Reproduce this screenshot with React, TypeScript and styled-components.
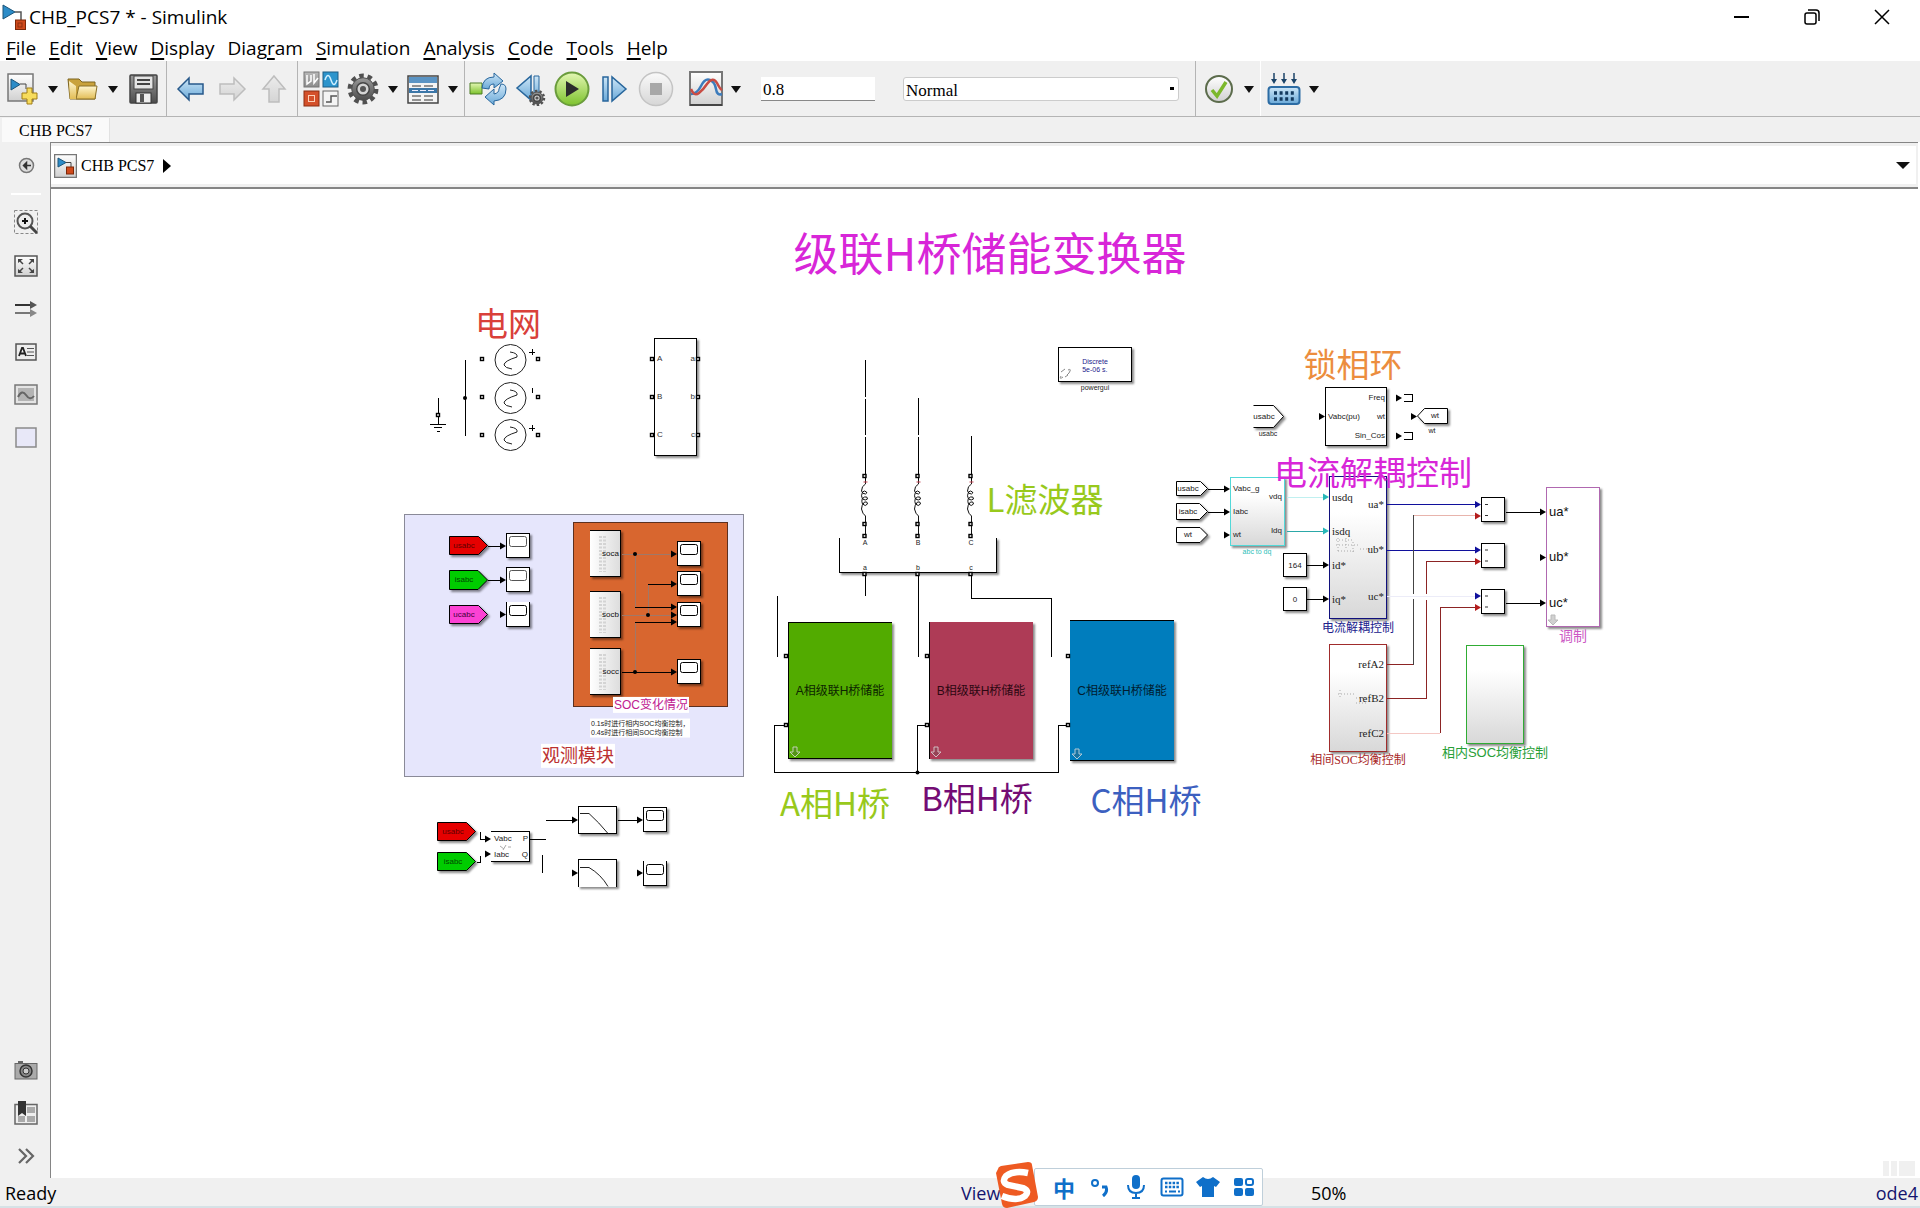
import React from "react";
import styled, { createGlobalStyle, css } from "styled-components";

const UI_FONT = `"Open Sans", "Noto Sans", sans-serif`;
const SONG_FONT = `"Liberation Serif", "Noto Sans CJK SC", serif`;
const BLOCK_FONT = `"Liberation Sans", "Noto Sans CJK SC", sans-serif`;
const NOTE_FONT = `"Noto Sans CJK SC", sans-serif`;

/* Sheet coordinates of the canvas' top left corner. */
const ORIGIN_X = 51;
const ORIGIN_Y = 189;

const GlobalStyle = createGlobalStyle`
  * { box-sizing: border-box; }
  html, body, #root { height: 100%; margin: 0; }
  body { font-family: ${UI_FONT}; background: #fff; color: #000; overflow: hidden; }
  button { font: inherit; color: inherit; background: none; border: 0; padding: 0; }
  svg { display: block; }
`;

const Window = styled.div`
  display: flex;
  flex-direction: column;
  height: 100vh;
`;

/* ---------- title and menu ---------- */

const TitleBar = styled.header`
  display: flex;
  align-items: center;
  height: 34px;
  padding: 0 3px 0 2px;
`;
const Title = styled.h1`
  flex: 1;
  margin: 0;
  padding-left: 3px;
  font-size: 19px;
  font-weight: 400;
  line-height: 34px;
`;
const WindowButton = styled.button`
  display: grid;
  place-items: center;
  width: 70px;
  height: 32px;
`;
const MenuBar = styled.nav`
  display: flex;
  gap: 13px;
  height: 27px;
  padding-left: 6px;
`;
const MenuItem = styled.button`
  font-size: 19px;
  line-height: 28px;
  u { text-underline-offset: 3px; text-decoration-thickness: 2px; }
`;

/* ---------- toolbar ---------- */

const Toolbar = styled.div`
  display: flex;
  height: 56px;
  background: #f0f0f0;
  border-bottom: 1px solid #b4b4b4;
`;
const ToolGroup = styled.div<{ $line?: string }>`
  display: flex;
  align-items: center;
  padding: 1px 2px 0;
  border-right: 1px solid ${(p) => p.$line ?? "#b4b4b4"};
`;
const ToolButton = styled.button`
  display: grid;
  place-items: center;
  width: 42px;
  height: 42px;
`;
const DropButton = styled.button`
  display: grid;
  place-items: center;
  width: 18px;
  height: 42px;
`;
const Fields = styled.div`
  display: flex;
  align-items: center;
  gap: 28px;
  padding: 0 14px 0 16px;
`;
const StopTime = styled.input`
  width: 114px;
  height: 24px;
  padding: 2px 2px 0;
  border: 0;
  border-bottom: 1px solid #888;
  background: #fff;
  font: 17px ${SONG_FONT};
`;
const ModeBox = styled.div`
  position: relative;
  width: 276px;
  &::after {
    content: "";
    position: absolute;
    right: 5px;
    top: 10px;
    width: 4px;
    height: 3px;
    background: #000;
  }
`;
const ModeSelect = styled.select`
  appearance: none;
  display: block;
  width: 100%;
  height: 24px;
  padding: 2px 2px 0;
  border: 1px solid #ccc;
  border-radius: 3px;
  background: #fff;
  color: #000;
  font: 17px ${SONG_FONT};
`;
const Spacer = styled.div`
  width: 8px;
`;

/* ---------- tabs and breadcrumb ---------- */

const TabStrip = styled.div`
  display: flex;
  align-items: flex-end;
  height: 25px;
  padding-left: 2px;
  background: #f0f0f0;
`;
const Tab = styled.button`
  height: 24px;
  padding: 2px 17px 0;
  background: #fafafa;
  border-right: 1px solid #e2e2e2;
  font-family: ${SONG_FONT};
  font-size: 16px;
`;
const Body = styled.div`
  display: flex;
  flex: 1;
  min-height: 0;
`;
const Palette = styled.aside`
  display: flex;
  flex-direction: column;
  align-items: center;
  width: 50px;
  padding: 0 0 1px 2px;
  background: #f0f0f0;
`;
const PaletteButton = styled.button<{ $tall?: boolean }>`
  display: grid;
  place-items: center;
  width: 42px;
  height: ${(p) => (p.$tall ? 47 : 43)}px;
`;
const PaletteLine = styled.hr`
  width: 30px;
  margin: 4px 0 6px;
  border: 0;
  border-top: 2px solid #fff;
`;
const Push = styled.div`
  flex: 1;
`;
const Editor = styled.main`
  display: flex;
  flex: 1;
  flex-direction: column;
  min-width: 0;
  border: solid #858585;
  border-width: 1px 0 0 1px;
  margin-right: 2px;
`;
const Breadcrumb = styled.div`
  display: flex;
  align-items: center;
  height: 44px;
  gap: 4px;
  padding: 1px 6px 0 0;
  border: solid #f0f0f0;
  border-width: 3px 2px 3px 0;
  box-shadow: 0 2px 0 #858585;
  font-family: ${SONG_FONT};
  font-size: 16px;
`;
const Crumb = styled.button`
  display: flex;
  align-items: center;
  gap: 4px;
  padding-left: 3px;
`;
const Canvas = styled.div`
  position: relative;
  flex: 1;
  margin-top: 2px;
  min-height: 0;
  overflow: hidden;
`;
const Wires = styled.svg`
  position: absolute;
  inset: 0;
  width: 1700px;
  height: 900px;
`;

/* ---------- status bar ---------- */

const StatusBar = styled.footer`
  position: relative;
  display: grid;
  grid-template-columns: 961fr 350fr 609fr;
  height: 30px;
  background: #f0f0f0;
  border-bottom: 2px solid #d6e2e6;
  font-size: 18px;
  line-height: 30px;
`;
const StatusText = styled.span`
  padding-left: 5px;
`;
const StatusEnd = styled.span`
  display: flex;
  justify-content: space-between;
  padding-right: 2px;
`;
const StatusLink = styled.a`
  color: #14146e;
  text-decoration: none;
`;
const InputMethod = styled.div`
  position: absolute;
  left: 994px;
  top: -16px;
  display: flex;
  align-items: center;
  height: 46px;
`;
const ImeKeys = styled.div`
  display: flex;
  align-items: center;
  height: 38px;
  margin: 4px 0 0 -8px;
  padding: 0 0 0 11px;
  background: #fff;
  border: 1px solid #bfcfda;
  border-radius: 2px;
`;
const ImeLogo = styled.button`
  position: relative;
  z-index: 1;
  width: 48px;
  height: 46px;
`;
const ImeKey = styled.button`
  display: grid;
  place-items: center;
  width: 36px;
  height: 36px;
  color: #0f6fc9;
  font-family: ${NOTE_FONT};
  font-size: 22px;
  font-weight: 700;
  line-height: 36px;
`;
const Grip = styled.div`
  position: absolute;
  right: 3px;
  bottom: 2px;
  display: flex;
  gap: 2px;
  span { height: 15px; width: 6px; background: #f0f0f0; }
  span:last-child { width: 16px; }
`;

/* ---------- diagram parts ---------- */

type Box = { $x: number; $y: number; $w: number; $h: number };
const box = css<Box>`
  position: absolute;
  left: ${(p) => p.$x - ORIGIN_X}px;
  top: ${(p) => p.$y - ORIGIN_Y}px;
  width: ${(p) => p.$w}px;
  height: ${(p) => p.$h}px;
`;
const Area = styled.div<Box & { $fill: string; $line: string }>`
  ${box}
  background: ${(p) => p.$fill};
  border: 1px solid ${(p) => p.$line};
`;
const Block = styled.div<Box & { $fill?: string; $line?: string; $sides?: string }>`
  ${box}
  background: ${(p) => p.$fill ?? "#fff"};
  border: solid ${(p) => p.$line ?? "#000"};
  border-width: ${(p) => p.$sides ?? "1px"};
  box-shadow: 2px 2px 2px rgba(0, 0, 0, 0.45);
`;
const Label = styled.span<{
  $x: number; $y: number; $size: number; $color?: string; $font?: string; $at?: "start" | "mid" | "end"; $plate?: boolean;
}>`
  position: absolute;
  left: ${(p) => p.$x - ORIGIN_X}px;
  top: ${(p) => p.$y - ORIGIN_Y}px;
  transform: translate(${(p) => (p.$at === "start" ? "0" : p.$at === "end" ? "-100%" : "-50%")}, -50%);
  font-family: ${(p) => p.$font ?? BLOCK_FONT};
  font-size: ${(p) => p.$size}px;
  line-height: ${(p) => (p.$plate ? 1.35 : 1.2)};
  padding: 0 ${(p) => (p.$plate ? 1 : 0)}px;
  background: ${(p) => (p.$plate ? "#fff" : "none")};
  color: ${(p) => p.$color ?? "#222"};
  white-space: pre;
`;

const SHADE = "linear-gradient(#fff 25%, #d8d8d8)";

type LabelRow = [string, number, number, number, string?, string?, ("start" | "mid" | "end")?, boolean?];

const LABELS: LabelRow[] = [
  ["电网", 508, 323, 33, "#d9403a", NOTE_FONT],
  ["L滤波器", 1045, 499, 33, "#98c91c", NOTE_FONT],
  ["A相H桥", 835, 803, 33, "#98c91c", NOTE_FONT],
  ["B相H桥", 977, 798, 33, "#740c74", NOTE_FONT],
  ["C相H桥", 1146, 800, 33, "#3c60c0", NOTE_FONT],
  ["锁相环", 1353, 364, 33, "#ec8d3e", NOTE_FONT],
  ["电流解耦控制", 1373, 472, 33, "#d826d8", NOTE_FONT],
  ["级联H桥储能变换器", 990, 252, 45, "#d826d8", NOTE_FONT],
  ["A", 657, 359, 8, "#333", BLOCK_FONT, "start"],
  ["B", 657, 397, 8, "#333", BLOCK_FONT, "start"],
  ["C", 657, 435, 8, "#333", BLOCK_FONT, "start"],
  ["a", 695, 359, 8, "#333", BLOCK_FONT, "end"],
  ["b", 695, 397, 8, "#333", BLOCK_FONT, "end"],
  ["c", 695, 435, 8, "#333", BLOCK_FONT, "end"],
  ["usabc", 464, 546, 8, "#5c0000"],
  ["isabc", 464, 580, 8, "#004800"],
  ["ucabc", 464, 615, 8, "#400038"],
  ["soca", 619, 554, 8, "#111", BLOCK_FONT, "end"],
  ["socb", 619, 615, 8, "#111", BLOCK_FONT, "end"],
  ["socc", 619, 672, 8, "#111", BLOCK_FONT, "end"],
  ["SOC变化情况", 651, 705, 12, "#c02090", BLOCK_FONT, "mid", true],
  ["0.1s时进行相内SOC均衡控制，\n0.4s时进行相间SOC均衡控制", 590, 728, 7, "#222", BLOCK_FONT, "start", true],
  ["观测模块", 578, 756, 18, "#bb3030", SONG_FONT, "mid", true],
  ["usabc", 453, 832, 8, "#5c0000"],
  ["isabc", 453, 862, 8, "#004800"],
  ["Vabc", 494, 839, 8, "#222", BLOCK_FONT, "start"],
  ["Iabc", 494, 855, 8, "#222", BLOCK_FONT, "start"],
  ["P", 528, 839, 8, "#222", BLOCK_FONT, "end"],
  ["Q", 528, 855, 8, "#222", BLOCK_FONT, "end"],
  ["A", 865, 543, 7], ["B", 918, 543, 7], ["C", 971, 543, 7],
  ["a", 865, 568, 7], ["b", 918, 568, 7], ["c", 971, 568, 7],
  ["Discrete\n5e-06 s.", 1095, 366, 7, "#22228c"],
  ["powergui", 1095, 388, 7],
  ["A相级联H桥储能", 840, 691, 12, "#0c2400"],
  ["B相级联H桥储能", 981, 691, 12, "#2c0812"],
  ["C相级联H桥储能", 1122, 691, 12, "#001c30"],
  ["usabc", 1264, 417, 8],
  ["usabc", 1268, 434, 7],
  ["Freq", 1385, 398, 8, "#222", BLOCK_FONT, "end"],
  ["Vabc(pu)", 1328, 417, 8, "#222", BLOCK_FONT, "start"],
  ["wt", 1385, 417, 8, "#222", BLOCK_FONT, "end"],
  ["Sin_Cos", 1385, 436, 8, "#222", BLOCK_FONT, "end"],
  ["wt", 1435, 416, 8],
  ["wt", 1432, 431, 7],
  ["usabc", 1188, 489, 8],
  ["isabc", 1188, 512, 8],
  ["wt", 1188, 535, 8],
  ["Vabc_g", 1233, 489, 8, "#222", BLOCK_FONT, "start"],
  ["Iabc", 1233, 512, 8, "#222", BLOCK_FONT, "start"],
  ["wt", 1233, 535, 8, "#222", BLOCK_FONT, "start"],
  ["vdq", 1282, 497, 8, "#222", BLOCK_FONT, "end"],
  ["Idq", 1282, 531, 8, "#222", BLOCK_FONT, "end"],
  ["abc to dq", 1257, 552, 7, "#2cc0b8"],
  ["usdq", 1332, 498, 11, "#222", SONG_FONT, "start"],
  ["isdq", 1332, 532, 11, "#222", SONG_FONT, "start"],
  ["id*", 1332, 566, 11, "#222", SONG_FONT, "start"],
  ["iq*", 1332, 600, 11, "#222", SONG_FONT, "start"],
  ["ua*", 1384, 505, 11, "#222", SONG_FONT, "end"],
  ["ub*", 1384, 550, 11, "#222", SONG_FONT, "end"],
  ["uc*", 1384, 597, 11, "#222", SONG_FONT, "end"],
  ["164", 1295, 566, 8],
  ["0", 1295, 600, 8],
  ["电流解耦控制", 1358, 628, 12, "#20208c", SONG_FONT],
  ["refA2", 1384, 665, 11, "#222", SONG_FONT, "end"],
  ["refB2", 1384, 699, 11, "#222", SONG_FONT, "end"],
  ["refC2", 1384, 734, 11, "#222", SONG_FONT, "end"],
  ["相间SOC均衡控制", 1358, 760, 12, "#a82828", SONG_FONT],
  ["相内SOC均衡控制", 1495, 753, 13, "#28a038"],
  ["ua*", 1549, 512, 13, "#111", BLOCK_FONT, "start"],
  ["ub*", 1549, 557, 13, "#111", BLOCK_FONT, "start"],
  ["uc*", 1549, 603, 13, "#111", BLOCK_FONT, "start"],
  ["调制", 1573, 637, 14, "#cc58c4", SONG_FONT],
];

const Port = ({ x, y }: { x: number; y: number }) => (
  <rect x={x - 1.5} y={y - 1.5} width="3" height="3" fill="#fff" stroke="#000" strokeWidth="1.4" />
);
const Tip = ({ x, y, c = "#000" }: { x: number; y: number; c?: string }) => (
  <path d={`M${x} ${y}l-6-3.5v7z`} fill={c} />
);
const Wire = ({ d, c = "#000" }: { d: string; c?: string }) => (
  <path d={d} fill="none" stroke={c} shapeRendering="crispEdges" />
);
const Tag = ({ x, y, w, h, fill = "#fff", open }: { x: number; y: number; w: number; h: number; fill?: string; open?: boolean }) => {
  const k = Math.min(10, h / 2);
  return (
    <path
      d={`M${x} ${y}h${w - k}l${k} ${h / 2}l${-k} ${h / 2}h${k - w}${open ? "" : "z"}`}
      fill={fill}
      stroke="#000"
      filter="url(#drop)"
    />
  );
};
const Screen = ({ x, y, faint }: { x: number; y: number; faint?: boolean }) => (
  <rect x={x + 4.5} y={y + 4.5} width="17" height="10" rx="2" fill="#fff" stroke={faint ? "#555" : "#000"} />
);
const Enter = ({ x, y, c = "#ddd" }: { x: number; y: number; c?: string }) => (
  <path d={`M${x - 2} ${y - 5}h4v5h3l-5 5l-5-5h3z`} fill="rgba(90,90,90,.35)" stroke={c} opacity=".8" />
);
const Source = ({ y }: { y: number }) => (
  <g fill="none" stroke="#222">
    <circle cx="510.500" cy={y} r="15.500" />
    <path d={`M510 ${y - 8}q8 1 7 5q-13 4-13 8q1 3 8 4`} />
  </g>
);
const Coil = ({ x }: { x: number }) => (
  <g fill="none" stroke="#111">
    <path d={`M${x} 480v4q-4 2-4 7q1 3 4 3q2-1 1-2q-2-2-4 0q-2 4 0 7q3 2 5 0q0-3-3-2q-4 2-2 7q3 3 5 0q0-3-3-2q-3 3-3 7q1 5 4 7v22`} />
    <path d={`M${x - 2} 482h4`} stroke="#c04050" />
    <Port x={x - 1} y={476} />
    <Port x={x - 1} y={524} />
    <Port x={x - 1} y={536} />
    <Port x={x - 1} y={574} />
  </g>
);

const SCOPES: [number, number, string?][] = [
  [506, 533], [506, 567], [506, 602, "0 1px 1px 1px"],
  [677, 541], [677, 571], [677, 602], [677, 659],
  [643, 807], [643, 861, "0 1px 1px 1px"],
];

function Diagram() {
  return (
    <Canvas>
      <Area $x={404} $y={514} $w={340} $h={263} $fill="#e6e6fc" $line="#8a8a98" />
      <Area $x={573} $y={522} $w={155} $h={185} $fill="#d8662f" $line="#5c3020" />
      <Block $x={654} $y={338} $w={43} $h={118} />
      {[530, 591, 648].map((y) => (
        <Block key={y} $x={590} $y={y} $w={31} $h={47} $fill="linear-gradient(90deg,#fff,#ddd)" $sides="1px 1px 1px 0" />
      ))}
      {SCOPES.map(([x, y, sides]) => (
        <Block key={`${x}-${y}`} $x={x} $y={y} $w={24} $h={25} $sides={sides} />
      ))}
      <Block $x={491} $y={831} $w={39} $h={31} $sides="1px 1px 1px 0" />
      <Block $x={578} $y={806} $w={39} $h={28} />
      <Block $x={578} $y={859} $w={39} $h={28} $sides="1px 1px 0 1px" />
      <Block $x={839} $y={538} $w={158} $h={35} $sides="0 1px 1px 1px" />
      <Block $x={1058} $y={347} $w={74} $h={35} />
      <Block $x={788} $y={622} $w={104} $h={137} $fill="#52ab00" $sides="1px 0 1px 1px" />
      <Block $x={929} $y={622} $w={104} $h={137} $fill="#ae3b56" $sides="0 0 0 1px" />
      <Block $x={1070} $y={620} $w={104} $h={141} $fill="#007dbd" $sides="1px 0" />
      <Block $x={1325} $y={387} $w={62} $h={59} />
      <Block $x={1230} $y={477} $w={55} $h={69} $fill={SHADE} $line="#52d8d8" />
      <Block $x={1329} $y={476} $w={58} $h={143} $fill={SHADE} $line="#10107c" />
      <Block $x={1329} $y={644} $w={58} $h={108} $fill={SHADE} $line="#a02c2c" />
      <Block $x={1466} $y={645} $w={58} $h={99} $fill={SHADE} $line="#30ac34" />
      <Block $x={1546} $y={487} $w={54} $h={140} $line="#b068b0" />
      <Block $x={1283} $y={553} $w={24} $h={24} />
      <Block $x={1283} $y={587} $w={24} $h={24} />
      {[497, 543, 589].map((y) => (
        <Block key={y} $x={1481} $y={y} $w={24} $h={25} />
      ))}

      <Wires viewBox={`${ORIGIN_X} ${ORIGIN_Y} 1700 900`} aria-hidden="true">
        {/* grid sources */}
        <Wire d="M465.500 360v76M438.500 398v26M430 424.500h16M434 427.500h8M437 431.500h3" />
        <circle cx="465" cy="398" r="2" />
        <Port x={438} y={415} />
        <Source y={360} /><Source y={398} /><Source y={435} />
        <Wire d="M529 352.500h6M532.500 349v6M532.500 388v5M529 428.500h6M532.500 425v6" />
        {[359, 397, 435].map((y) => (
          <g key={y}>
            <Port x={482} y={y} /><Port x={538} y={y} /><Port x={652} y={y} /><Port x={698} y={y} />
          </g>
        ))}

        {/* observation tags */}
        <Tag x={449.5} y={536.5} w={38} h={18} fill="#e60000" />
        <Tag x={449.5} y={570.5} w={38} h={19} fill="#00cc00" />
        <Tag x={449.5} y={605.5} w={38} h={18} fill="#fc42d4" />
        <Wire d="M488 546.500h14M488 580.500h14" />
        <Tip x={506} y={546} /><Tip x={506} y={580} /><Tip x={506} y={614.5} />
        {SCOPES.map(([x, y], i) => <Screen key={i} x={x - 1} y={y - 1} faint={i < 2} />)}
        {[530, 591, 648].map((y) => (
          <path key={y} d={`M600.500 ${y + 6}v36M604.500 ${y + 6}v36`} stroke="#d4d4d4" strokeWidth="3" strokeDasharray="2 1.500" />
        ))}
        <Wire c="#a07868" d="M622 554.500h50M622 615.500h50M635.500 554v53M648.500 584v31M635.500 622v50" />
        <Wire d="M635 607.500h37M648 584.500h24M635 622.500h37M622 672.500h50" />
        {[554, 584, 607, 615, 622, 672].map((y) => <Tip key={y} x={677} y={y} />)}
        <circle cx="635" cy="554" r="2" /><circle cx="648" cy="615" r="2" /><circle cx="635" cy="672" r="2" />

        {/* power measurement */}
        <Tag x={437.5} y={822.5} w={38} h={18} fill="#e60000" />
        <Tag x={437.5} y={852.5} w={38} h={18} fill="#00cc00" />
        <Wire d="M480.500 832v7.500h6M477 862.500h3.500v-7M530 839.500h16M542.500 855v18M546 820.500h27M618 820.500h20" />
        <Tip x={491} y={839} /><Tip x={491} y={854} /><Tip x={578} y={820} /><Tip x={643} y={820} />
        <Tip x={578} y={873} /><Tip x={643} y={873} />
        <path d="M580 813.500h9q10 9 19 20M580 867.500h9q12 7 19 19" fill="none" stroke="#222" />
        <path d="M500 846l4 3m2-4l-3 5m5-3h3" stroke="#aaa" />

        {/* filter and busbar */}
        <Wire d="M865.500 360v37M865.500 399v36M865.500 437v43M918.500 398v37M918.500 437v43M971.500 436v44" />
        <Coil x={865.5} /><Coil x={918.5} /><Coil x={971.5} />
        <Wire d="M865.500 576v20M918.500 576v81M971.500 576v22.500h80v58.500M777.500 596v61" />
        <Wire d="M785 725.500h-10.500v47h284v-47h11M917.500 772v-46.500h11" />
        <circle cx="917.500" cy="772.500" r="2" />
        {[787, 928, 1069].map((x) => <g key={x}><Port x={x - 1} y={656} /><Port x={x - 1} y={725} /></g>)}
        <Enter x={795} y={752} /><Enter x={936} y={752} /><Enter x={1077} y={754} />
        <path d="M1061 372l4-3m3 1q4-2 1 3l-2 2m-4 2q-4 3-2-1m4 1l3-2" fill="none" stroke="#888" />

        {/* phase locked loop */}
        <Tag x={1253.5} y={405.5} w={30} h={22} open />
        <path d="M1447.500 408.500h-23l-7 7.500l7 7.500h23z" fill="#fff" stroke="#000" filter="url(#drop)" />
        <Tip x={1325} y={416.5} /><Tip x={1402} y={398} /><Tip x={1417} y={416.5} /><Tip x={1402} y={436} />
        <Wire d="M1404 394.500h8.500v7h-8.500M1404 432.500h8.500v7h-8.500" />

        {/* decoupled current control */}
        <Tag x={1176.5} y={481.5} w={31} h={14} /><Tag x={1176.5} y={503.5} w={31} h={16} /><Tag x={1176.5} y={527.5} w={31} h={15} />
        <Wire d="M1208 489.500h17M1208 512.500h17M1307 565.500h17M1307 599.500h17M1506 512.500h35M1506 603.500h35" />
        <Tip x={1230} y={489} /><Tip x={1230} y={512} /><Tip x={1230} y={535} />
        <Tip x={1329} y={565} /><Tip x={1329} y={599} />
        <Tip x={1546} y={512} /><Tip x={1546} y={557.5} /><Tip x={1546} y={603} />
        <Wire c="#c0f0f0" d="M1287 497.500h37" />
        <Wire c="#2ca8a8" d="M1287 531.500h37" />
        <Tip x={1329} y={497} c="#28b8b8" /><Tip x={1329} y={531} c="#28b8b8" />
        <Wire c="#10109c" d="M1387 504.500h89M1387 550.500h89" />
        <Wire c="#ececf8" d="M1387 596.500h89" />
        <Wire c="#e8b4ac" d="M1414 515.500h62" />
        <Wire c="#444" d="M1413.500 515v79M1413.500 599v66" />
        <Wire c="#8c2424" d="M1387 664.500h26M1387 698.500h39.500v-99M1426.500 594v-32.500h50M1440.500 733v-125.500h36" />
        <Wire c="#f4c8c4" d="M1387 733.500h53" />
        {[504.5, 550, 596].map((y) => (
          <g key={y}>
            <Tip x={1481} y={y} c="#10109c" /><Tip x={1481} y={y + 11.5} c="#b41c1c" />
            <path d={`M1485 ${y}h3M1485 ${y + 11}h3`} stroke="#333" />
          </g>
        ))}
        <path d="M1336 540h18M1336 545h22M1338 551h16M1360 549h10M1338 538v14M1346 538v10M1353 542v12M1338 694h16M1356 698h10M1356 703h12M1340 690v8" stroke="#aaa" strokeDasharray="1 2" />
        <Enter x={1553} y={620} c="#aaa" />
      </Wires>

      {LABELS.map(([text, x, y, size, color, font, at, plate], i) => (
        <Label key={i} $x={x} $y={y} $size={size} $color={color} $font={font} $at={at} $plate={plate}>{text}</Label>
      ))}
      <Grip><span /><span /><span /></Grip>
    </Canvas>
  );
}

/* ---------- icons ---------- */

const Svg = ({ w, h, children }: { w: number; h: number; children: React.ReactNode }) => (
  <svg width={w} height={h} viewBox={`0 0 ${w} ${h}`} fill="none" aria-hidden="true">{children}</svg>
);

const Defs = styled.svg`
  position: absolute;
  width: 0;
  height: 0;
`;
const Grad = ({ id, a, b }: { id: string; a: string; b: string }) => (
  <linearGradient id={id} x1="0" y1="0" x2="0" y2="1"><stop stopColor={a} /><stop offset="1" stopColor={b} /></linearGradient>
);
const Gradients = () => (
  <Defs aria-hidden="true">
    <defs>
      <Grad id="blue" a="#cde6f7" b="#6aa9d8" />
      <Grad id="pale" a="#ececec" b="#d4d4d4" />
      <Grad id="gold" a="#fff6cf" b="#e2bd55" />
      <Grad id="steel" a="#9a9a9a" b="#4c4c4c" />
      <Grad id="silver" a="#b8b8b8" b="#8c8c8c" />
      <Grad id="paper" a="#ffffff" b="#d0d0d0" />
      <Grad id="green" a="#e4f7b4" b="#7cc22c" />
      <Grad id="stop" a="#fafafa" b="#d6d6d6" />
      <filter id="drop" x="-20%" y="-20%" width="150%" height="160%">
        <feDropShadow dx="2" dy="2" stdDeviation="1" floodOpacity=".45" />
      </filter>
    </defs>
  </Defs>
);

const AppIcon = () => (
  <Svg w={24} h={26}>
    <path d="M1 1v14l12-7z" fill="#2c8cc8" stroke="#1c5478" />
    <path d="M13 8h6v9" stroke="#555" strokeWidth="1.500" />
    <rect x="13.500" y="16" width="10" height="9.500" fill="#d04a1c" stroke="#7c2808" /><rect x="16" y="19" width="4" height="4" stroke="#8c3010" />
  </Svg>
);
const ModelIcon = () => (
  <Svg w={23} h={24}>
    <rect x=".5" y=".5" width="22" height="23" fill="url(#paper)" stroke="#777" strokeWidth="1.500" />
    <path d="M4 4v9l8-4.500z" fill="#2c8cc8" stroke="#1c5478" /><path d="M12 8.500h5v5" stroke="#444" />
    <rect x="12.500" y="13" width="7" height="7" fill="#d04a1c" stroke="#7c2808" />
  </Svg>
);
const NewIcon = () => (
  <Svg w={32} h={34}>
    <rect x="1" y="2" width="25" height="27" fill="url(#paper)" stroke="#777" strokeWidth="1.500" />
    <path d="M4 7v11l9-5.500z" fill="#2c8cc8" stroke="#1c5478" /><path d="M13 12h6v5" stroke="#444" />
    <path d="M20 16h5v5h5v6h-5v5h-5v-5h-5v-6h5z" fill="#f7dc5c" stroke="#a07c14" />
  </Svg>
);
const FolderIcon = () => (
  <Svg w={32} h={24}>
    <path d="M3 22L1 2h11l3 3h13v17z" fill="#c9a23c" stroke="#7d6420" /><path d="M9 22l3-13h18l-2 13z" fill="url(#gold)" stroke="#8a7028" /><path d="M2 4l7 5v13H3z" fill="url(#gold)" />
  </Svg>
);
const SaveIcon = () => (
  <Svg w={29} h={30}>
    <rect x="1" y="1" width="27" height="28" rx="1" fill="url(#steel)" stroke="#444" strokeWidth="1.500" />
    <rect x="5" y="2" width="19" height="13" fill="#e4e4e4" stroke="#444" /><path d="M8 6h13M8 10h13" stroke="#444" strokeWidth="2" />
    <rect x="7" y="19" width="15" height="10" fill="#eee" stroke="#333" /><rect x="11" y="20" width="4" height="8" fill="#555" />
  </Svg>
);
const LeftIcon = () => (
  <Svg w={29} h={26}><path d="M2 13L13 2v6h14v10H13v6z" fill="url(#blue)" stroke="#27588a" strokeWidth="1.500" /></Svg>
);
const RightIcon = () => (
  <Svg w={29} h={26}><path d="M27 13L16 2v6H2v10h14v6z" fill="url(#pale)" stroke="#bdbdbd" strokeWidth="1.500" /></Svg>
);
const UpIcon = () => (
  <Svg w={26} h={30}><path d="M13 2l11 13h-6v13H8V15H2z" fill="url(#pale)" stroke="#bdbdbd" strokeWidth="1.500" /></Svg>
);
const LibraryIcon = () => (
  <Svg w={36} h={36}>
    <rect x="1" y="1" width="15" height="15" fill="url(#silver)" stroke="#777" /><path d="M4 4v9l4-3V4M11 3v9l4-5" stroke="#fff" strokeWidth="1.500" />
    <rect x="20" y="1" width="15" height="15" fill="#2c94cc" stroke="#1c5c84" /><path d="M22 9q3-9 6 0t6 0" stroke="#cfefff" strokeWidth="1.500" />
    <rect x="1" y="20" width="15" height="15" fill="#d4502a" stroke="#8c2c10" /><rect x="5.500" y="24.500" width="6" height="6" stroke="#fbd0b8" />
    <rect x="20" y="20" width="15" height="15" fill="#f4f4f4" stroke="#666" /><path d="M23 31h5v-6h6" stroke="#555" strokeWidth="1.500" />
  </Svg>
);
const GearShape = ({ x, y, r }: { x: number; y: number; r: number }) => (
  <g>
    <circle cx={x} cy={y} r={r * 0.88} stroke="#505050" strokeWidth={r * 0.3} strokeDasharray={`${r * 0.3} ${r * 0.253}`} />
    <circle cx={x} cy={y} r={r * 0.75} fill="url(#steel)" stroke="#505050" />
    <circle cx={x} cy={y} r={r * 0.42} fill="#d4d4d4" stroke="#444" strokeWidth="1.500" />
    <circle cx={x} cy={y} r={r * 0.2} fill="#555" />
  </g>
);
const GearIcon = () => <Svg w={32} h={32}><GearShape x={16} y={16} r={15} /></Svg>;
const ListIcon = () => (
  <Svg w={32} h={29}>
    <rect x="1" y="1" width="30" height="27" fill="#f4f4f4" stroke="#444" strokeWidth="1.500" />
    <rect x="2" y="2" width="28" height="6" fill="#5b94c4" /><rect x="2" y="13" width="28" height="5" fill="#3c77a8" />
    <path d="M5 11h9m3 0h9M5 21h9m3 0h9M5 25h9m3 0h9" stroke="#333" /><path d="M5 15.500h22" stroke="#eef" strokeDasharray="6 2" />
  </Svg>
);
const RefreshIcon = () => (
  <Svg w={38} h={34}>
    <path d="M1 11h12v11H1z" fill="url(#green)" stroke="#4c7c24" />
    <path d="M13 16q1-11 12-11V1l9 8-9 7v-4q-5 0-5 5z" fill="url(#blue)" stroke="#28669c" /><path d="M37 17q0 11-12 12v4l-9-8 9-8v5q5-1 5-5l2-5q5 0 5 5z" fill="url(#blue)" stroke="#28669c" />
  </Svg>
);
const StepBackIcon = () => (
  <Svg w={31} h={34}>
    <path d="M16 4v24L2 16z" fill="url(#blue)" stroke="#28669c" strokeWidth="1.500" /><path d="M19 4h5v24h-5z" fill="url(#blue)" stroke="#28669c" />
    <GearShape x={22} y={26} r={8} />
  </Svg>
);
const PlayIcon = () => (
  <Svg w={36} h={36}>
    <circle cx="18" cy="18" r="16.500" fill="url(#green)" stroke="#6a9c3c" strokeWidth="2" /><path d="M12 10v16l13-8z" fill="#2c2c2c" />
  </Svg>
);
const StepIcon = () => (
  <Svg w={27} h={28}>
    <path d="M2 2h5v24H2z" fill="url(#blue)" stroke="#28669c" strokeWidth="1.500" /><path d="M11 2v24l14-12z" fill="url(#blue)" stroke="#28669c" strokeWidth="1.500" />
  </Svg>
);
const StopIcon = () => (
  <Svg w={36} h={36}>
    <circle cx="18" cy="18" r="16.500" fill="url(#stop)" stroke="#c4c4c4" strokeWidth="1.500" /><rect x="12" y="12" width="12" height="12" fill="#a8a8a8" />
  </Svg>
);
const ScopeIcon = () => (
  <Svg w={34} h={36}>
    <rect x="1" y="1" width="32" height="33" fill="url(#paper)" stroke="#777" strokeWidth="2" />
    <path d="M2 23q6 0 10-8t9-6 6 9 6 5" stroke="#3c7cbc" strokeWidth="2.500" /><path d="M2 18q3 8 8 4 4-3 8-9 6-8 10-1 3 6 5 7" stroke="#c84c44" strokeWidth="2.500" />
    <path d="M1 34h32" stroke="#444" strokeWidth="2" />
  </Svg>
);
const CheckIcon = () => (
  <Svg w={30} h={30}>
    <circle cx="15" cy="15" r="13" fill="url(#paper)" stroke="#5c6c4c" strokeWidth="2" /><path d="M8 16l5 6 9-14" stroke="#7cb82c" strokeWidth="3.500" />
  </Svg>
);
const BuildIcon = () => (
  <Svg w={34} h={34}>
    <path d="M7 1v7M17 1v7M27 1v7" stroke="#1c4468" strokeWidth="1.500" /><path d="M4 7h6l-3 5zM14 7h6l-3 5zM24 7h6l-3 5z" fill="#1c4468" />
    <rect x="1.500" y="15" width="31" height="17" rx="3" fill="url(#blue)" stroke="#2c6ca4" strokeWidth="2" />
    <path d="M7 21h20M7 27h20" stroke="#12395e" strokeWidth="3.500" strokeDasharray="3 2.600" />
  </Svg>
);
const Down = ({ w = 10 }: { w?: number }) => (
  <Svg w={w} h={7}><path d={`M0 0h${w}L${w / 2} 7z`} fill="#111" /></Svg>
);

const HideIcon = () => (
  <Svg w={17} h={17}><circle cx="8.500" cy="8.500" r="7" fill="#ddd" stroke="#777" strokeWidth="1.500" /><path d="M13 8.500H6M8.500 5.500l-3 3 3 3z" fill="#333" stroke="#333" strokeWidth="1.500" /></Svg>
);
const ZoomIcon = () => (
  <Svg w={24} h={25}>
    <rect x=".5" y=".5" width="23" height="23" stroke="#888" strokeDasharray="3 2" /><circle cx="11" cy="11" r="7.500" fill="#eee" stroke="#555" strokeWidth="2" />
    <path d="M8 11h6M11 8v6" stroke="#111" strokeWidth="2" /><path d="M16 16l7 7" stroke="#444" strokeWidth="3" />
  </Svg>
);
const FitIcon = () => (
  <Svg w={24} h={22}>
    <rect x="1" y="1" width="22" height="20" fill="url(#paper)" stroke="#555" strokeWidth="1.500" />
    <path d="M4 8V4h5zM20 8V4h-5zM4 14v4h5zM20 14v4h-5z" fill="#444" /><path d="M5 5l4 4M19 5l-4 4M5 17l4-4M19 17l-4-4" stroke="#444" strokeWidth="1.500" />
  </Svg>
);
const SignalsIcon = () => (
  <Svg w={24} h={16}>
    <path d="M1 4h16" stroke="#333" strokeWidth="2" /><path d="M16 0l7 4-7 4z" fill="#555" /><path d="M1 12h16" stroke="#777" strokeWidth="2" /><path d="M16 8l7 4-7 4z" fill="#888" />
  </Svg>
);
const TextIcon = () => (
  <Svg w={22} h={18}>
    <rect x="1" y="1" width="20" height="16" fill="#eee" stroke="#555" strokeWidth="1.500" />
    <path d="M4 13l3-8h1l3 8M5 10.500h5" stroke="#222" strokeWidth="1.800" /><path d="M12 5.500h7M12 9h7M12 12.500h7" stroke="#555" />
  </Svg>
);
const ImageIcon = () => (
  <Svg w={24} h={21}>
    <rect x="1" y="1" width="22" height="19" fill="#e4e4e4" stroke="#777" strokeWidth="1.500" /><rect x="4" y="4" width="16" height="13" fill="#b4b4b4" />
    <path d="M4 13q4-8 8-2t8 1" stroke="#666" strokeWidth="2" />
  </Svg>
);
const AreaIcon = () => <Svg w={22} h={21}><rect x="1" y="1" width="20" height="19" fill="#e8e8f8" stroke="#8a8a8a" strokeWidth="1.500" /></Svg>;
const CameraIcon = () => (
  <Svg w={24} h={20}>
    <path d="M4 1h5v3H4z" fill="#666" /><rect x="1" y="3.500" width="22" height="15.500" fill="#aaa" stroke="#666" /><circle cx="12" cy="11" r="6" fill="#888" stroke="#333" strokeWidth="1.500" /><circle cx="12" cy="11" r="3" fill="#ccc" stroke="#333" />
  </Svg>
);
const BookmarkIcon = () => (
  <Svg w={24} h={24}>
    <rect x="1" y="3.500" width="22" height="19.500" fill="#eee" stroke="#666" strokeWidth="1.500" /><path d="M13 6h8v6h-8zM4 15h7v6H4zM13 15h8v6h-8z" fill="#aaa" /><path d="M4 0h8v15l-4-3-4 3z" fill="#333" />
  </Svg>
);
const MoreIcon = () => <Svg w={18} h={16}><path d="M2 1l7 7-7 7M9 1l7 7-7 7" stroke="#666" strokeWidth="2.200" /></Svg>;

const SogouLogo = () => (
  <Svg w={48} h={46}>
    <path d="M4 7Q4 5 7 4L34 0q4 0 4 3l6 32q0 4-4 5L13 46q-4 0-5-4L2 11z" fill="#ee5a22" />
    <path d="M34 11Q20 8 12 14q-5 6 2 9l15 3q7 3 2 8-8 6-23 0" stroke="#fff" strokeWidth="6.500" />
  </Svg>
);
const PunctIcon = () => (
  <Svg w={20} h={20}><circle cx="5" cy="6" r="3" stroke="currentColor" strokeWidth="2" /><path d="M12 10h4q2 5-3 9" stroke="currentColor" strokeWidth="3" /></Svg>
);
const MicIcon = () => (
  <Svg w={20} h={26}><rect x="6" y="1" width="8" height="14" rx="4" fill="currentColor" /><path d="M2 11q0 8 8 8t8-8M10 19v4M6 24h8" stroke="currentColor" strokeWidth="2" /></Svg>
);
const KeyboardIcon = () => (
  <Svg w={24} h={20}><rect x="1.500" y="1.500" width="21" height="17" rx="2" stroke="currentColor" strokeWidth="2" /><path d="M5 6h14M5 10h14" stroke="currentColor" strokeWidth="2.500" strokeDasharray="2.500 1.300" /><path d="M5 14.500h2m2 0h7m2 0h2" stroke="currentColor" strokeWidth="2" /></Svg>
);
const ShirtIcon = () => (
  <Svg w={24} h={22}><path d="M7 1q5 4 10 0l7 5-4 5-2-1v11H6V10l-2 1-4-5z" fill="currentColor" /></Svg>
);
const GridIcon = () => (
  <Svg w={22} h={20}><rect x="1" y="1" width="9" height="8" rx="2" fill="currentColor" /><rect x="13" y="2" width="7" height="6" rx="2" stroke="currentColor" strokeWidth="2" /><rect x="1" y="11" width="9" height="8" rx="2" fill="currentColor" /><rect x="12" y="11" width="9" height="8" rx="2" fill="currentColor" /></Svg>
);

const MENUS: [string, string, string][] = [
  ["", "F", "ile"], ["", "E", "dit"], ["", "V", "iew"], ["", "D", "isplay"], ["Diag", "r", "am"],
  ["", "S", "imulation"], ["", "A", "nalysis"], ["", "C", "ode"], ["", "T", "ools"], ["", "H", "elp"],
];

const Tool = ({ label, icon }: { label: string; icon: React.ReactNode }) => (
  <ToolButton aria-label={label}>{icon}</ToolButton>
);
const Drop = ({ label }: { label: string }) => (
  <DropButton aria-label={label}><Down /></DropButton>
);

export default function App() {
  return (
    <Window>
      <GlobalStyle />
      <Gradients />
      <TitleBar>
        <AppIcon />
        <Title>CHB_PCS7 * - Simulink</Title>
        <WindowButton aria-label="Minimize"><Svg w={16} h={16}><path d="M0 8h15" stroke="#000" strokeWidth="2" /></Svg></WindowButton>
        <WindowButton aria-label="Restore">
          <Svg w={16} h={17}><rect x="1" y="4" width="11" height="11" rx="2" stroke="#000" strokeWidth="1.500" /><path d="M4 1h8q3 0 3 3v8" stroke="#000" strokeWidth="1.500" /></Svg>
        </WindowButton>
        <WindowButton aria-label="Close"><Svg w={16} h={16}><path d="M1 1l14 14M15 1L1 15" stroke="#000" strokeWidth="1.500" /></Svg></WindowButton>
      </TitleBar>
      <MenuBar>
        {MENUS.map(([a, key, b]) => <MenuItem key={a + key}>{a}<u>{key}</u>{b}</MenuItem>)}
      </MenuBar>

      <Toolbar>
        <ToolGroup>
          <Tool label="New model" icon={<NewIcon />} /><Drop label="New options" />
          <Tool label="Open" icon={<FolderIcon />} /><Drop label="Open options" />
          <Tool label="Save" icon={<SaveIcon />} />
        </ToolGroup>
        <ToolGroup>
          <Tool label="Back" icon={<LeftIcon />} /><Tool label="Forward" icon={<RightIcon />} /><Tool label="Up to parent" icon={<UpIcon />} />
        </ToolGroup>
        <ToolGroup>
          <Tool label="Library browser" icon={<LibraryIcon />} />
          <Tool label="Model configuration" icon={<GearIcon />} /><Drop label="Configuration options" />
          <Tool label="Model explorer" icon={<ListIcon />} /><Drop label="Explorer options" />
        </ToolGroup>
        <ToolGroup>
          <Tool label="Fast restart" icon={<RefreshIcon />} /><Tool label="Step back" icon={<StepBackIcon />} />
          <Tool label="Run" icon={<PlayIcon />} /><Tool label="Step forward" icon={<StepIcon />} /><Tool label="Stop" icon={<StopIcon />} />
          <Spacer />
          <Tool label="Data inspector" icon={<ScopeIcon />} /><Drop label="Inspector options" />
          <Fields>
            <StopTime aria-label="Stop time" defaultValue="0.8" />
            <ModeBox><ModeSelect aria-label="Simulation mode"><option>Normal</option></ModeSelect></ModeBox>
          </Fields>
        </ToolGroup>
        <ToolGroup $line="#fff"><Tool label="Model advisor" icon={<CheckIcon />} /><Drop label="Advisor options" /></ToolGroup>
        <ToolGroup $line="transparent"><Tool label="Build" icon={<BuildIcon />} /><Drop label="Build options" /></ToolGroup>
      </Toolbar>

      <TabStrip><Tab>CHB PCS7</Tab></TabStrip>

      <Body>
        <Palette>
          <PaletteButton $tall aria-label="Hide explorer bar"><HideIcon /></PaletteButton>
          <PaletteLine />
          <PaletteButton aria-label="Zoom"><ZoomIcon /></PaletteButton>
          <PaletteButton aria-label="Fit to view"><FitIcon /></PaletteButton>
          <PaletteButton aria-label="Sample time"><SignalsIcon /></PaletteButton>
          <PaletteButton aria-label="Annotation"><TextIcon /></PaletteButton>
          <PaletteButton aria-label="Image"><ImageIcon /></PaletteButton>
          <PaletteButton aria-label="Area"><AreaIcon /></PaletteButton>
          <Push />
          <PaletteButton aria-label="Screenshot"><CameraIcon /></PaletteButton>
          <PaletteButton aria-label="Viewmarks"><BookmarkIcon /></PaletteButton>
          <PaletteButton aria-label="More"><MoreIcon /></PaletteButton>
        </Palette>
        <Editor>
          <Breadcrumb>
            <Crumb><ModelIcon />CHB PCS7</Crumb>
            <Svg w={16} h={14}><path d="M5 0v14l8-7z" fill="#000" /></Svg>
            <Push />
            <button aria-label="History"><Down w={14} /></button>
          </Breadcrumb>
          <Diagram />
        </Editor>
      </Body>

      <StatusBar>
        <StatusText>Ready</StatusText>
        <StatusLink href="#diagnostics">View</StatusLink>
        <StatusEnd><span>50%</span><StatusLink href="#solver">ode4</StatusLink></StatusEnd>
        <InputMethod>
          <ImeLogo aria-label="Sogou input"><SogouLogo /></ImeLogo>
          <ImeKeys>
            <ImeKey>中</ImeKey>
            <ImeKey aria-label="Punctuation"><PunctIcon /></ImeKey>
            <ImeKey aria-label="Voice"><MicIcon /></ImeKey>
            <ImeKey aria-label="Keyboard"><KeyboardIcon /></ImeKey>
            <ImeKey aria-label="Skins"><ShirtIcon /></ImeKey>
            <ImeKey aria-label="Toolbox"><GridIcon /></ImeKey>
          </ImeKeys>
        </InputMethod>
      </StatusBar>
    </Window>
  );
}
